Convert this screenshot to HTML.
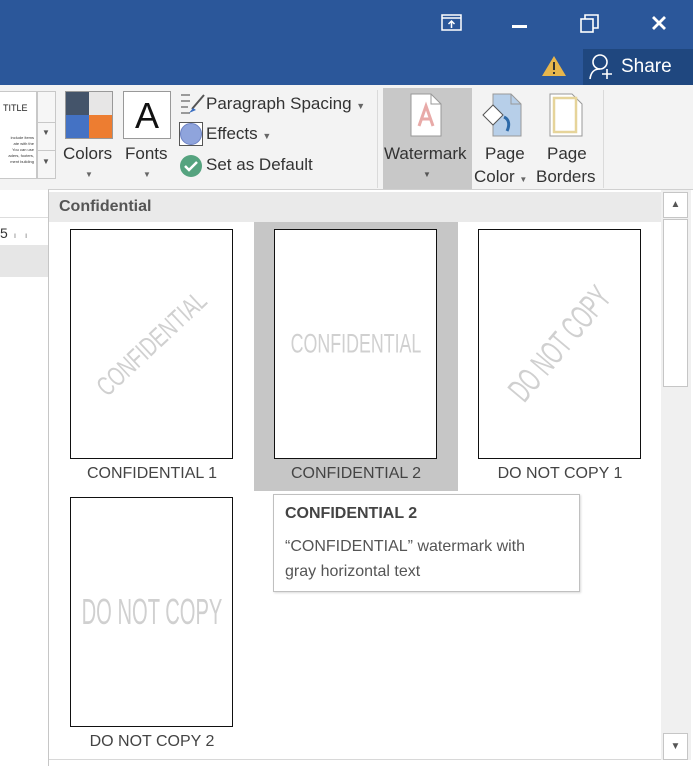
<!DOCTYPE html>
<html><head><meta charset="utf-8"><style>
*{margin:0;padding:0;box-sizing:border-box}
body{width:693px;height:766px;overflow:hidden;position:relative;background:#fff;font-family:"Liberation Sans",sans-serif}
.a{position:absolute}
.wm{position:absolute;left:50%;top:50%;color:#d0d0d0;font-family:"Liberation Sans Narrow","Liberation Sans",sans-serif;white-space:nowrap;line-height:1}
.pg{position:absolute;border:1.5px solid #111;background:#fff;overflow:hidden}
.lbl{position:absolute;font-size:16px;color:#444;text-align:center;width:204px}
.rb{font-size:17px;color:#333}
</style></head><body>
<!-- title bar -->
<div class="a" style="left:0;top:0;width:693px;height:85px;background:#2b579a"></div>
<div class="a" style="left:583px;top:49px;width:110px;height:36px;background:#1f477f"></div>
<svg class="a" style="left:441px;top:14px" width="22" height="18"><rect x="1" y="1" width="19" height="15" fill="none" stroke="#fff" stroke-width="1.5"/><line x1="1" y1="4" x2="20" y2="4" stroke="#fff" stroke-width="1.5"/><path d="M10.5 14V7M7.5 10l3-3 3 3" stroke="#fff" stroke-width="1.5" fill="none"/></svg>
<div class="a" style="left:512px;top:25px;width:15px;height:3px;background:#fff"></div>
<svg class="a" style="left:580px;top:14px" width="20" height="20"><rect x="1" y="5" width="12" height="13" fill="none" stroke="#fff" stroke-width="1.6"/><path d="M5 5V1h13v13h-5" fill="none" stroke="#fff" stroke-width="1.6"/></svg>
<svg class="a" style="left:651px;top:15px" width="16" height="16"><path d="M2 2l12 12M14 2L2 14" stroke="#fff" stroke-width="2.8"/></svg>
<svg class="a" style="left:541px;top:55px" width="26" height="22"><path d="M13 1L25 21H1z" fill="#e8b64b"/><rect x="12" y="7" width="2" height="8" fill="#333"/><rect x="12" y="17" width="2" height="2" fill="#333"/></svg>
<svg class="a" style="left:589px;top:53px" width="26" height="28"><circle cx="11" cy="9" r="7" fill="none" stroke="#fff" stroke-width="1.6"/><path d="M1 26c1-8 5-10 10-10" fill="none" stroke="#fff" stroke-width="1.6"/><path d="M18 16v10M13 21h10" stroke="#fff" stroke-width="1.6"/></svg>
<div class="a" style="left:621px;top:56px;color:#fff;font-size:19px">Share</div>
<!-- ribbon -->
<div class="a" style="left:0;top:85px;width:693px;height:105px;background:#f3f3f3"></div>
<div class="a" style="left:0;top:91px;width:37px;height:88px;background:#fff;border:1px solid #c8c8c8;border-left:none"></div>
<div class="a" style="left:3px;top:103px;font-size:9px;color:#222">TITLE</div>
<div class="a" style="left:0;top:135px;font-size:4px;line-height:6px;color:#333;width:34px;text-align:right">include items<br>ate with the<br>You can use<br>aders, footers,<br>ment building</div>
<div class="a" style="left:37px;top:91px;width:19px;height:88px;background:#f6f6f6;border:1px solid #c8c8c8"></div>
<div class="a" style="left:37px;top:122px;width:19px;height:1px;background:#c8c8c8"></div>
<div class="a" style="left:37px;top:150px;width:19px;height:1px;background:#c8c8c8"></div>
<div class="a" style="left:42px;top:128px;font-size:8px;color:#555">▼</div>
<div class="a" style="left:42px;top:157px;font-size:8px;color:#555">▼</div>
<div class="a" style="left:65px;top:91px;width:48px;height:48px;border:1px solid #999">
<div class="a" style="left:0;top:0;width:23px;height:23px;background:#44546a"></div>
<div class="a" style="left:23px;top:0;width:23px;height:23px;background:#e7e6e6"></div>
<div class="a" style="left:0;top:23px;width:23px;height:23px;background:#4472c4"></div>
<div class="a" style="left:23px;top:23px;width:23px;height:23px;background:#ed7d31"></div></div>
<div class="a rb" style="left:63px;top:144px">Colors</div>
<div class="a" style="left:85px;top:170px;font-size:8px;color:#666">▼</div>
<div class="a" style="left:123px;top:91px;width:48px;height:48px;border:1px solid #999;background:#fff;font-size:36px;text-align:center;line-height:48px;color:#111">A</div>
<div class="a rb" style="left:125px;top:144px">Fonts</div>
<div class="a" style="left:143px;top:170px;font-size:8px;color:#666">▼</div>
<svg class="a" style="left:180px;top:93px" width="26" height="24"><path d="M1 2h9M1 8h9M1 14h7M1 20h9" stroke="#666" stroke-width="1.2"/><path d="M24 2L12 16" stroke="#555" stroke-width="2"/><path d="M9 20l4-5 3 2z" fill="#3b6fc1"/></svg>
<div class="a rb" style="left:206px;top:94px">Paragraph Spacing <span style="font-size:9px;color:#666">▼</span></div>
<div class="a" style="left:179px;top:122px;width:24px;height:24px;border:1px solid #555;background:#fff"></div>
<div class="a" style="left:180px;top:123px;width:22px;height:22px;border-radius:50%;background:#8fa4dc;border:1px solid #6c82c4"></div>
<div class="a rb" style="left:206px;top:124px">Effects <span style="font-size:9px;color:#666">▼</span></div>
<svg class="a" style="left:179px;top:154px" width="24" height="24"><circle cx="12" cy="12" r="11" fill="#55a37f"/><path d="M6 12l4 4 8-8" fill="none" stroke="#fff" stroke-width="2.5"/></svg>
<div class="a rb" style="left:206px;top:155px">Set as Default</div>
<div class="a" style="left:377px;top:90px;width:1px;height:98px;background:#dadada"></div>
<div class="a" style="left:383px;top:88px;width:89px;height:102px;background:#c8c8c8"></div>
<svg class="a" style="left:410px;top:93px" width="32" height="44"><path d="M1 1h20l10 10v32H1z" fill="#fff" stroke="#999"/><path d="M21 1v10h10" fill="none" stroke="#999"/><path d="M9 33l7-20 7 20M11 26h10" fill="none" stroke="#e8aaa8" stroke-width="3"/></svg>
<div class="a rb" style="left:384px;top:144px">Watermark</div>
<div class="a" style="left:423px;top:170px;font-size:8px;color:#555">▼</div>
<svg class="a" style="left:481px;top:93px" width="46" height="44"><path d="M12 1h18l10 10v32H12z" fill="#b7cfe9" stroke="#999"/><path d="M30 1v10h10" fill="none" stroke="#999"/><path d="M2 22l10-10 10 10-10 10z" fill="#fff" stroke="#555"/><path d="M23 24c5 2 6 8 3 14" fill="none" stroke="#2e6aa8" stroke-width="3"/></svg>
<div class="a rb" style="left:485px;top:144px">Page</div>
<div class="a rb" style="left:474px;top:167px">Color <span style="font-size:8px;color:#666">▼</span></div>
<svg class="a" style="left:549px;top:93px" width="34" height="44"><path d="M1 1h22l10 10v32H1z" fill="#fff" stroke="#999"/><rect x="5" y="5" width="22" height="34" fill="none" stroke="#e6d49a" stroke-width="2.5"/></svg>
<div class="a rb" style="left:547px;top:144px">Page</div>
<div class="a rb" style="left:536px;top:167px">Borders</div>
<div class="a" style="left:603px;top:90px;width:1px;height:98px;background:#dadada"></div>
<!-- left doc area -->
<div class="a" style="left:0;top:190px;width:48px;height:576px;background:#fff"></div>
<div class="a" style="left:0;top:217px;width:48px;height:1px;background:#ddd"></div>
<div class="a" style="left:0;top:245px;width:48px;height:32px;background:#e6e6e6"></div>
<div class="a" style="left:0;top:225px;font-size:14px;color:#333">5 <span style="font-size:8px;color:#777">&nbsp;ı&nbsp;&nbsp;&nbsp;&nbsp;ı</span></div>
<!-- panel -->
<div class="a" style="left:48px;top:189px;width:645px;height:577px;background:#fff;border-left:1px solid #c6c6c6;border-top:1px solid #d0d0d0"></div>
<div class="a" style="left:49px;top:192px;width:612px;height:30px;background:#eaeaea"></div>
<div class="a" style="left:59px;top:198px;font-size:16px;font-weight:bold;color:#555">Confidential</div>
<div class="a" style="left:661px;top:190px;width:30px;height:570px;background:#f0f0f0"></div>
<div class="a" style="left:663px;top:192px;width:25px;height:26px;background:#fff;border:1px solid #c6c6c6;font-size:10px;color:#555;text-align:center;line-height:24px">▲</div>
<div class="a" style="left:663px;top:219px;width:25px;height:168px;background:#fff;border:1px solid #c6c6c6"></div>
<div class="a" style="left:663px;top:733px;width:25px;height:27px;background:#fff;border:1px solid #c6c6c6;font-size:10px;color:#555;text-align:center;line-height:25px">▼</div>
<div class="a" style="left:49px;top:759px;width:612px;height:1px;background:#d8d8d8"></div>
<div class="a" style="left:254px;top:222px;width:204px;height:269px;background:#c6c6c6"></div>
<div class="pg" style="left:70px;top:229px;width:163px;height:230px"><div class="wm" style="font-size:27px;transform:translate(-50%,-50%) rotate(-43deg) scaleX(.7)">CONFIDENTIAL</div></div>
<div class="pg" style="left:274px;top:229px;width:163px;height:230px"><div class="wm" style="font-size:27px;transform:translate(-50%,-50%) scaleX(.66)">CONFIDENTIAL</div></div>
<div class="pg" style="left:478px;top:229px;width:163px;height:230px"><div class="wm" style="font-size:34px;transform:translate(-50%,-50%) rotate(-50deg) scaleX(.58)">DO NOT COPY</div></div>
<div class="pg" style="left:70px;top:497px;width:163px;height:230px"><div class="wm" style="font-size:36px;transform:translate(-50%,-50%) scaleX(.56)">DO NOT COPY</div></div>
<div class="lbl" style="left:50px;top:465px">CONFIDENTIAL 1</div>
<div class="lbl" style="left:254px;top:465px">CONFIDENTIAL 2</div>
<div class="lbl" style="left:458px;top:465px">DO NOT COPY 1</div>
<div class="lbl" style="left:50px;top:733px">DO NOT COPY 2</div>
<div class="a" style="left:273px;top:494px;width:307px;height:98px;background:#fff;border:1px solid #c0c0c0;box-shadow:1px 1px 2px rgba(0,0,0,.15)"></div>
<div class="a" style="left:285px;top:505px;font-size:16px;font-weight:bold;color:#444">CONFIDENTIAL 2</div>
<div class="a" style="left:285px;top:534px;font-size:16px;color:#555;line-height:25px">“CONFIDENTIAL” watermark with<br>gray horizontal text</div>
</body></html>
